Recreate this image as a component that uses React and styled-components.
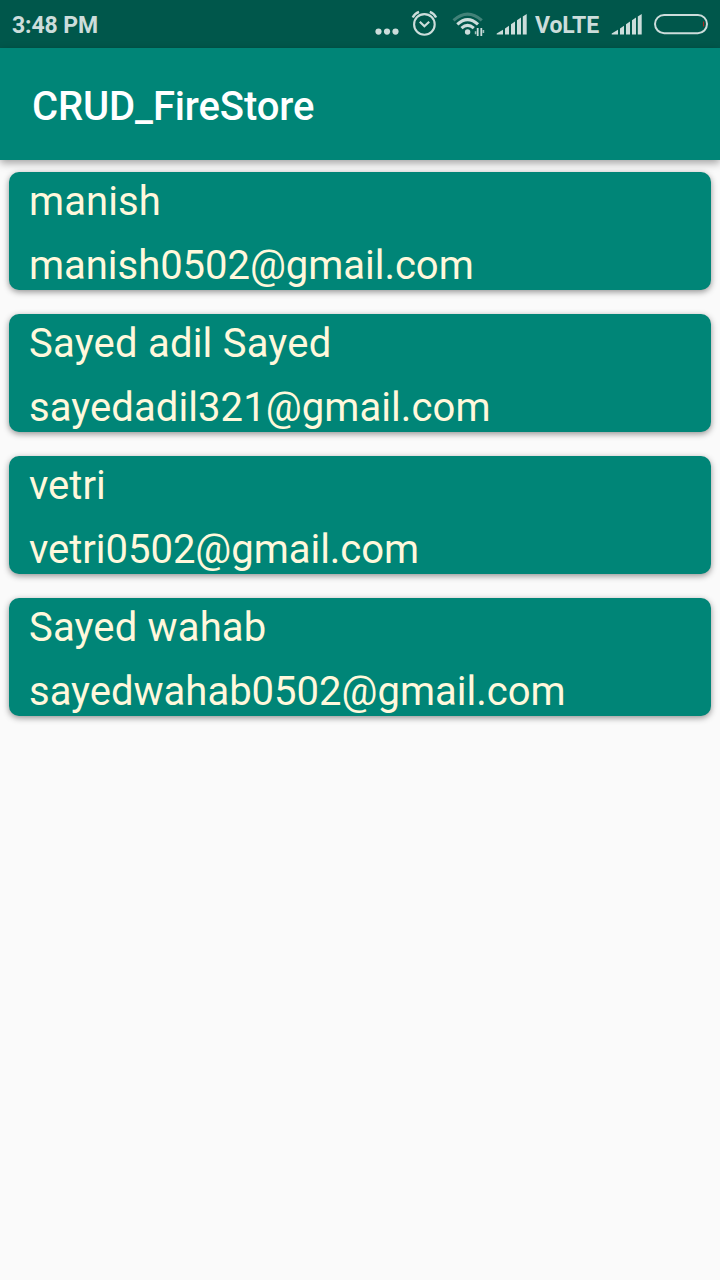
import React from 'react';
import styled, { createGlobalStyle } from 'styled-components';

const GlobalStyle = createGlobalStyle`
  * { box-sizing: border-box; }
  body {
    margin: 0;
    background: #fafafa;
    font-family: Roboto, "Liberation Sans", sans-serif;
  }
`;

const Screen = styled.div`
  width: 720px;
  height: 1280px;
  display: flex;
  flex-direction: column;
  background: #fafafa;
  overflow: hidden;
`;

const StatusBar = styled.header`
  flex: none;
  height: 48px;
  padding: 0 12px;
  display: flex;
  align-items: center;
  background: #00574b;
  color: #ccdddb;
`;

const StatusText = styled.span`
  display: block;
  font-size: 23px;
  font-weight: 700;
  line-height: 40px;
  padding-top: 3px;
  white-space: nowrap;
  letter-spacing: ${(p) => p.$tracking || 0}px;
`;

const StatusIcons = styled.div`
  margin-left: auto;
  display: flex;
  align-items: center;
  height: 48px;
`;

const Glyph = styled.svg`
  display: block;
  flex: none;
  margin-right: ${(p) => p.$gap || 0}px;
`;

const VolteLabel = styled.div`
  width: 84px;
  padding-left: 8px;
`;

const AppBar = styled.div`
  flex: none;
  position: relative;
  height: 112px;
  padding: 6px 32px 0;
  display: flex;
  align-items: center;
  background: #008577;
  box-shadow: 0 3px 8px rgba(0, 0, 0, 0.36);
`;

const Title = styled.h1`
  margin: 0;
  color: #fff;
  font-size: 40px;
  font-weight: 500;
  line-height: 48px;
  letter-spacing: -0.12px;
`;

const List = styled.main`
  display: flex;
  flex-direction: column;
  gap: 24px;
  padding: 12px 9px;
`;

const Card = styled.article`
  height: 118px;
  padding: 6px 20px 0;
  border-radius: 10px;
  background: #008577;
  box-shadow: 0 2px 6px rgba(0, 0, 0, 0.42);
`;

const Line = styled.p`
  margin: 0 0 16px;
  color: #fff8dc;
  font-size: 40px;
  line-height: 48px;
  letter-spacing: ${(p) => p.$tracking || 0}px;
  white-space: nowrap;
`;

const users = [
  { name: 'manish', email: 'manish0502@gmail.com', nameTracking: 0.1, emailTracking: -0.03 },
  { name: 'Sayed adil Sayed', email: 'sayedadil321@gmail.com', nameTracking: 0.22, emailTracking: 0.08 },
  { name: 'vetri', email: 'vetri0502@gmail.com', emailTracking: -0.03 },
  { name: 'Sayed wahab', email: 'sayedwahab0502@gmail.com', nameTracking: 0.16 },
];

function Dots() {
  return (
    <Glyph width="26" height="48" $gap={10} fill="currentColor">
      <circle cx="4.5" cy="31.6" r="3.1" />
      <circle cx="13" cy="31.6" r="3.1" />
      <circle cx="21.5" cy="31.6" r="3.1" />
    </Glyph>
  );
}

function Alarm() {
  return (
    <Glyph width="30" height="48" $gap={12} fill="none" stroke="currentColor" strokeWidth="2.1">
      <circle cx="14.4" cy="24.4" r="10.3" />
      <path d="M9.8 21.7l4.6 4.5 4.8-4.5" strokeWidth="2.2" />
      <path d="M2.7 17.4Q4.6 13.4 9 11.8M19.8 11.8Q24.2 13.4 26.1 17.4" strokeWidth="2.4" />
    </Glyph>
  );
}

function Wifi() {
  return (
    <Glyph width="34" height="48" $gap={10} fill="none" stroke="currentColor">
      <path d="M1.5 20.4Q15.6 7.8 29.8 20.4" strokeWidth="3" opacity="0.32" />
      <path d="M5.3 24.4Q15.6 15 26 24.4" strokeWidth="3.1" />
      <path d="M9.5 28.2Q15.6 22.6 21.8 28.2" strokeWidth="3" />
      <circle cx="15.6" cy="32" r="2.7" fill="currentColor" stroke="none" />
      <path d="M25.7 28v8M29.3 28v8" strokeWidth="1.8" />
      <path d="M23.6 31.2v3M31.4 30v3" strokeWidth="1.6" opacity="0.8" />
    </Glyph>
  );
}

function Signal({ gap }) {
  return (
    <Glyph width="31" height="48" $gap={gap} fill="currentColor">
      <path d="M.7 34.6v-1.2L7 29.7v4.9zM9 34.6v-6.2l4-2.6v8.8zM15 34.6V24.3l4-2.7v13zM21 34.6V20.2l4-2.7v17.1zM26.8 34.6V16.4l3.9-2.4v20.6z" />
    </Glyph>
  );
}

function Battery() {
  return (
    <Glyph width="54" height="48" fill="none">
      <rect x="1" y="15" width="52" height="18.2" rx="9.1" stroke="currentColor" strokeWidth="2" />
      <path d="M49.6 21.5v5" stroke="#d32018" strokeWidth="0.9" />
    </Glyph>
  );
}

export default function App() {
  return (
    <Screen>
      <GlobalStyle />
      <StatusBar>
        <StatusText $tracking={-0.1}>3:48 PM</StatusText>
        <StatusIcons>
          <Dots />
          <Alarm />
          <Wifi />
          <Signal />
          <VolteLabel>
            <StatusText $tracking={-0.1}>VoLTE</StatusText>
          </VolteLabel>
          <Signal gap={12} />
          <Battery />
        </StatusIcons>
      </StatusBar>
      <AppBar>
        <Title>CRUD_FireStore</Title>
      </AppBar>
      <List>
        {users.map((user) => (
          <Card key={user.email}>
            <Line $tracking={user.nameTracking}>{user.name}</Line>
            <Line $tracking={user.emailTracking}>{user.email}</Line>
          </Card>
        ))}
      </List>
    </Screen>
  );
}
